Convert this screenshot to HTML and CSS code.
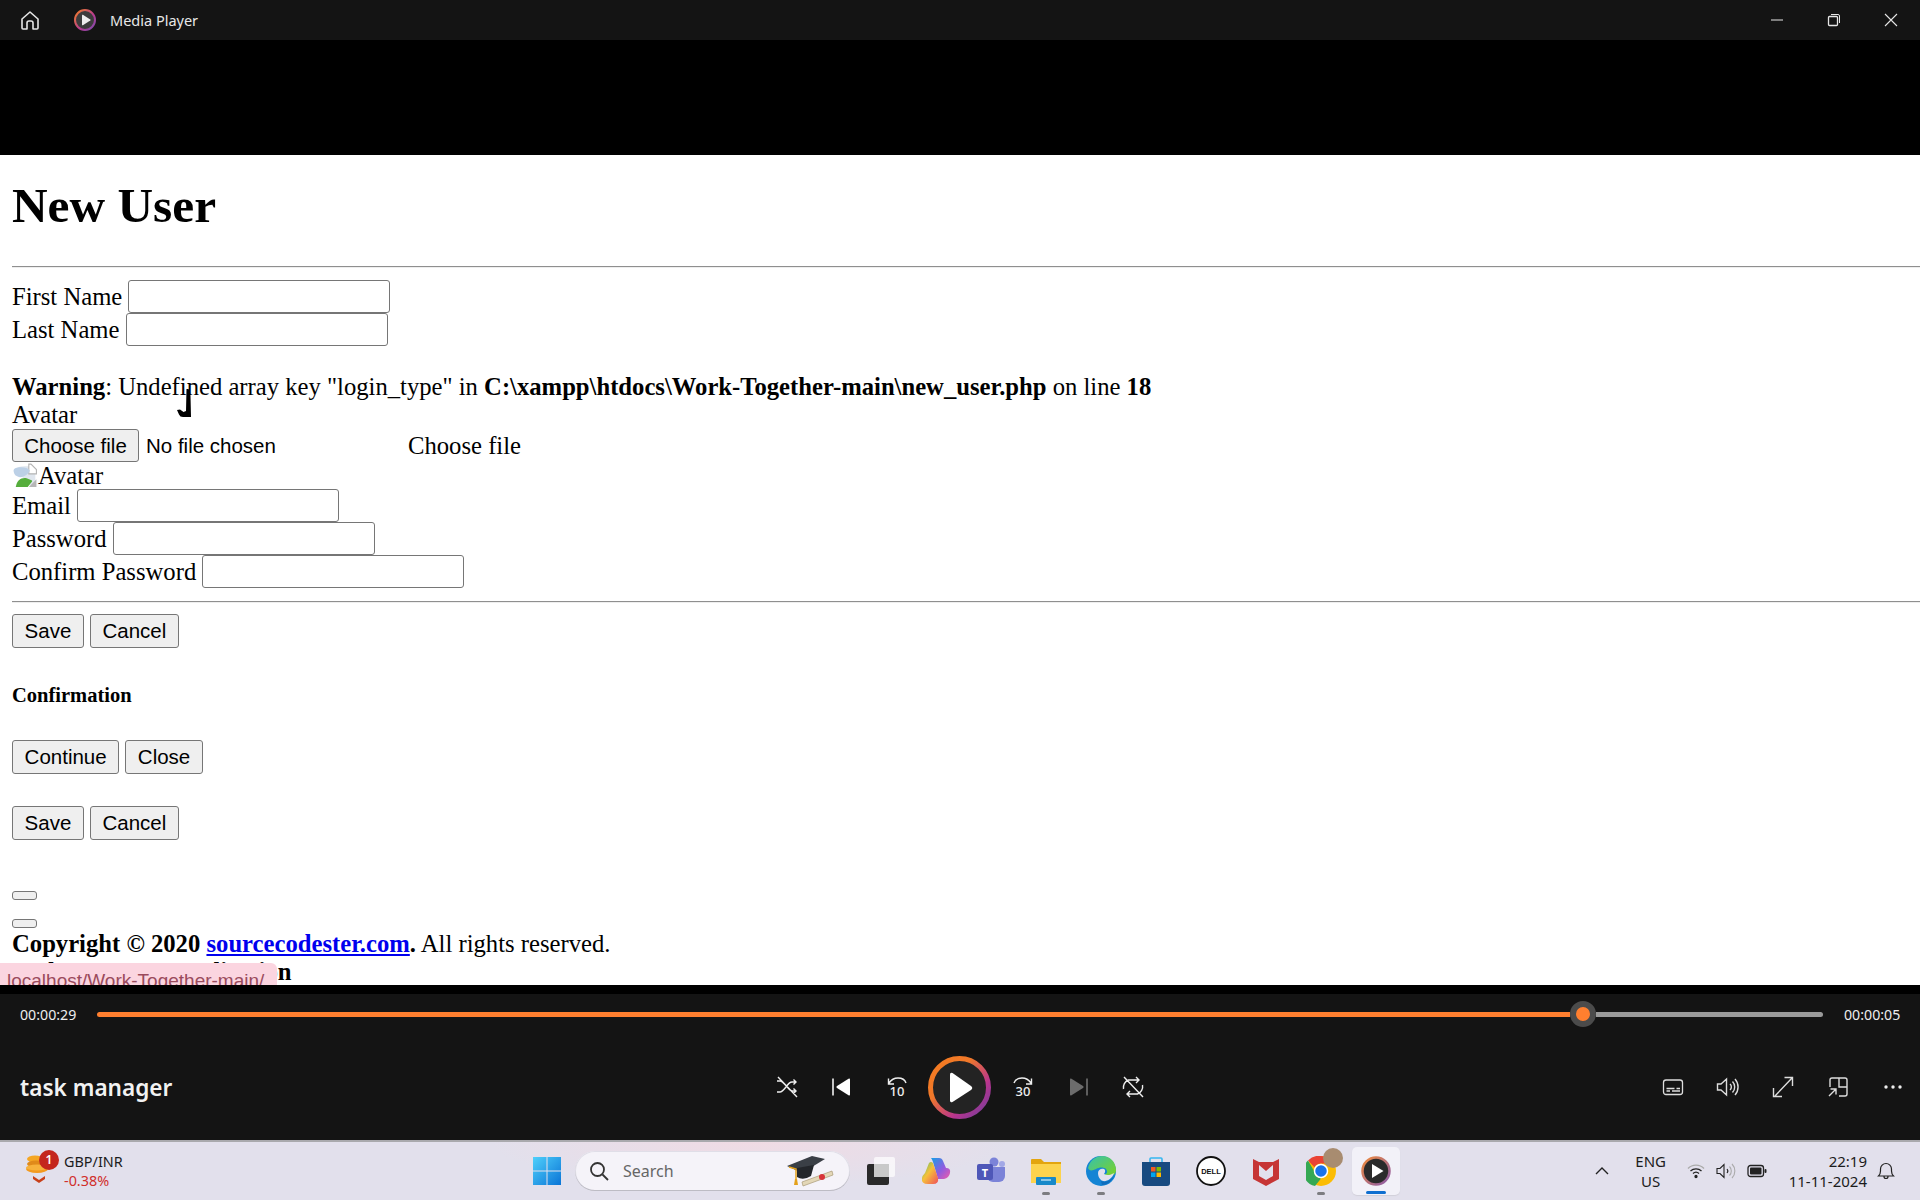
FILE: index.html
```html
<!DOCTYPE html>
<html lang="en">
<head>
<meta charset="utf-8">
<title>Media Player</title>
<link rel="stylesheet" href="styles.css">
</head>
<body>
<div class="app">
  <header class="titlebar">
    <svg class="tb-home" width="24" height="24" viewBox="0 0 24 24" fill="none" stroke="#e6e6e6" stroke-width="1.6" stroke-linejoin="round"><path d="M4 11 12 4l8 7v9a1 1 0 0 1-1 1h-4v-6a2 2 0 0 0-2-2h-2a2 2 0 0 0-2 2v6H5a1 1 0 0 1-1-1z"/></svg>
    <svg class="tb-logo" width="24" height="24" viewBox="0 0 24 24"><defs><linearGradient id="ring1" x1="0" y1="0" x2="1" y2="1"><stop offset="0" stop-color="#f58025"/><stop offset=".6" stop-color="#b53a92"/><stop offset="1" stop-color="#7a4fb0"/></linearGradient></defs><circle cx="12" cy="12" r="10" fill="#3c3c3c" stroke="url(#ring1)" stroke-width="2"/><path d="M9 7.3v9.4a.6.6 0 0 0 .9.5l7.4-4.7a.6.6 0 0 0 0-1L9.900 6.800a.6.6 0 0 0-.9.5z" fill="#eee"/></svg>
    <span class="tb-title">Media Player</span>
    <div class="win-btns">
      <span class="win-btn"><svg width="14" height="14" viewBox="0 0 14 14"><path d="M1 7h12" stroke="#e6e6e6"/></svg></span>
      <span class="win-btn"><svg width="14" height="14" viewBox="0 0 14 14" fill="none" stroke="#e6e6e6"><rect x="1.500" y="3.500" width="9" height="9" rx="1" stroke-width="1.300"/><path d="M4 1.500h7a1.500 1.500 0 0 1 1.500 1.500v7"/></svg></span>
      <span class="win-btn"><svg width="14" height="14" viewBox="0 0 14 14"><path d="M1 1l12 12M13 1 1 13" stroke="#e6e6e6" stroke-width="1.100"/></svg></span>
    </div>
  </header>
  <div class="letterbox"></div>
  <main class="page">
    <h1 class="heading">New User</h1>
    <hr class="rule rule-top">
    <div class="row"><label>First Name</label> <input class="field" type="text"></div>
    <div class="row"><label>Last Name</label> <input class="field" type="text"></div>
    <div class="line warn"><b>Warning</b>: Undefined array key "login_type" in <b>C:\xampp\htdocs\Work-Together-main\new_user.php</b> on line <b>18</b></div>
    <div class="line">Avatar</div>
    <div class="file-row"><button class="btn" type="button">Choose file</button><span class="no-file">No file chosen</span><span class="file-label">Choose file</span></div>
    <div class="img-row"><svg width="26" height="25" viewBox="0 0 23 23"><path d="M2 6q3-3 9-3h5l5 4v14h-4z" fill="#dfe6ee"/><path d="M15 1h2l5 5v4h-7z" fill="#fff" stroke="#b4b4b4"/><path d="M1 7c0-2 3-3 7-3s6 1 8 3c-1 3-5 6-9 6-3 0-6-2-6-6z" fill="#bcd0e6"/><path d="M3 22c1-6 5-9 10-8l5 2v1l-4 5z" fill="#55ad3c"/><path d="M15 22l7-7v7z" fill="#b6b6b6"/></svg><span>Avatar</span></div>
    <div class="row"><label>Email</label> <input class="field" type="text"></div>
    <div class="row"><label>Password</label> <input class="field" type="text"></div>
    <div class="row"><label>Confirm Password</label> <input class="field" type="text"></div>
    <hr class="rule rule-mid">
    <div class="btn-row"><button class="btn" type="button">Save</button><button class="btn" type="button">Cancel</button></div>
    <h5 class="confirm">Confirmation</h5>
    <div class="btn-row continue"><button class="btn" type="button">Continue</button><button class="btn" type="button">Close</button></div>
    <div class="btn-row save2"><button class="btn" type="button">Save</button><button class="btn" type="button">Cancel</button></div>
    <button class="btn-tiny first" type="button"></button>
    <button class="btn-tiny second" type="button"></button>
    <div class="line copy"><b>Copyright © 2020 <a href="#">sourcecodester.com</a>.</b> All rights reserved.</div>
    <div class="line"><b>Task Manager Application</b></div>
    <svg class="cursor" width="17" height="28" viewBox="0 0 17 28"><path d="M9.500 0h2l1.500 3 .5 4 .5 21H6q-3 0-4-2.500L0 21l3-.5 3.500 2.500 2.500-1z" fill="#000"/></svg>
    <div class="status">localhost/Work-Together-main/</div>
  </main>
  <div class="band"></div>
  <section class="player">
    <div class="seek">
      <span class="time">00:00:29</span>
      <div class="track"><div class="done"></div><div class="thumb"></div><div class="rest"></div></div>
      <span class="time">00:00:05</span>
    </div>
    <div class="transport">
      <div class="name">task manager</div>
      <div class="controls">
        <span class="ctl"><svg width="24" height="24" viewBox="0 0 24 24" fill="none" stroke="#eee" stroke-width="1.400"><path d="M2 6h3c4 0 8 9 12 10h4M2 17h3c2 0 4-2.500 6-5 2-3 4-5 6-5h4M18.500 4.500 21 7l-2.500 2.500M18.500 13.500 21 16l-2.500 2.500M3 2l19 20"/></svg></span>
        <span class="ctl"><svg width="24" height="24" viewBox="0 0 24 24"><path d="M3 3.500v17" stroke="#fff" stroke-width="1.500"/><path d="M20 4.500v15q0 1.500-1.500.8L7 13q-1.500-1 0-2l11.500-7.300q1.500-.7 1.500.8z" fill="#fff"/></svg></span>
        <span class="ctl"><svg width="26" height="26" viewBox="0 0 26 26" fill="none" stroke="#eee" stroke-width="1.400"><path d="M5 9c2-3 5-5 9-5 4 0 7 2 8 5M4.500 4.500V10H10"/><text x="13" y="22" class="ico-num" text-anchor="middle">10</text></svg></span>
        <span class="ctl play"><svg width="63" height="63" viewBox="0 0 63 63"><defs><linearGradient id="ring2" x1="0" y1="0" x2="1" y2="1"><stop offset="0" stop-color="#f57c1f"/><stop offset=".35" stop-color="#f0782a"/><stop offset=".7" stop-color="#b8348f"/><stop offset="1" stop-color="#6c3f9c"/></linearGradient></defs><circle cx="31.500" cy="31.500" r="29" fill="#232323" stroke="url(#ring2)" stroke-width="5"/><path d="M22 18.500v26q0 2.500 2.500 1.400l18.500-11.800q2.500-2.200 0-4.200L24.500 17q-2.500-1-2.500 1.500z" fill="#fff"/></svg></span>
        <span class="ctl"><svg width="26" height="26" viewBox="0 0 26 26" fill="none" stroke="#eee" stroke-width="1.400"><path d="M21 9c-2-3-5-5-9-5-4 0-7 2-8 5M21.500 4.500V10H16"/><text x="13" y="22" class="ico-num" text-anchor="middle">30</text></svg></span>
        <span class="ctl"><svg width="24" height="24" viewBox="0 0 24 24"><path d="M21 3.500v17" stroke="#777" stroke-width="1.500"/><path d="M4 4.500v15q0 1.500 1.500.8L17 13q1.500-1 0-2L5.500 3.700Q4 3 4 4.500z" fill="#6c6c6c"/></svg></span>
        <span class="ctl"><svg width="24" height="24" viewBox="0 0 24 24" fill="none" stroke="#eee" stroke-width="1.400"><path d="M2.500 14a8 8 0 0 1 5-9h10M15 2l3 3-3 3M21.500 10a8 8 0 0 1-5 9h-10M9 16l-3 3 3 3M3 2l19 20"/></svg></span>
      </div>
      <div class="tools">
        <span class="ctl"><svg width="24" height="24" viewBox="0 0 24 24" fill="none" stroke="#ddd" stroke-width="1.300"><rect x="2.500" y="5" width="19" height="14.500" rx="2.500"/><path d="M5.500 13.500h8M15.500 13.500h3.500M5.500 16h3.500M11 16h8"/></svg></span>
        <span class="ctl"><svg width="24" height="24" viewBox="0 0 24 24" fill="none" stroke="#ddd" stroke-width="1.400"><path d="M1.500 9v6h3.500l5.500 5V4L5 9zM14 9a4 4 0 0 1 0 6M16.500 6.500a8 8 0 0 1 0 11M19 4a12 12 0 0 1 0 16"/></svg></span>
        <span class="ctl"><svg width="24" height="24" viewBox="0 0 24 24" fill="none" stroke="#ddd" stroke-width="1.400"><path d="M4 21 21 3M13.500 2.500H21.500V11M2.500 13v8.500H11"/></svg></span>
        <span class="ctl"><svg width="24" height="24" viewBox="0 0 24 24" fill="none" stroke="#ddd" stroke-width="1.400"><path d="M4 12V5a2 2 0 0 1 2-2h13a2 2 0 0 1 2 2v14a2 2 0 0 1-2 2h-6M13 3v9h8M3 21l7-7M4.500 14h5.500v5.500"/></svg></span>
        <span class="ctl"><svg width="24" height="24" viewBox="0 0 24 24" fill="#eee"><circle cx="5" cy="12" r="1.700"/><circle cx="12" cy="12" r="1.700"/><circle cx="19" cy="12" r="1.700"/></svg></span>
      </div>
    </div>
  </section>
  <footer class="taskbar">
    <div class="widget">
      <div class="coin">
        <svg width="26" height="38" viewBox="0 0 26 38"><ellipse cx="10" cy="10" rx="8" ry="3.500" fill="#f5a623"/><ellipse cx="11" cy="15" rx="9" ry="3.500" fill="#e08a1a"/><ellipse cx="12" cy="20" rx="11" ry="4" fill="#f39a1f"/><ellipse cx="12" cy="18.500" rx="11" ry="3" fill="#f7b23c"/><path d="M8 27l6 4 6-4v3l-6 4-6-4z" fill="#c8401a"/></svg>
        <span class="badge">1</span>
      </div>
      <div class="w-text"><span class="w-name">GBP/INR</span><span class="w-val">-0.38%</span></div>
    </div>
    <div class="apps">
      <span class="app-ico win"><svg width="30" height="30" viewBox="0 0 30 30"><defs><linearGradient id="wing" x1="0" y1="0" x2="1" y2="1"><stop offset="0" stop-color="#4fd0fb"/><stop offset="1" stop-color="#0a74d6"/></linearGradient></defs><path d="M1 1h13.500v13.500H1zM15.500 1H29v13.500H15.500zM1 15.500h13.500V29H1zM15.500 15.500H29V29H15.500z" fill="url(#wing)"/></svg></span>
      <div class="search">
        <svg width="20" height="20" viewBox="0 0 20 20" fill="none" stroke="#333" stroke-width="1.800"><circle cx="8.500" cy="8.500" r="6.500"/><path d="M13.500 13.500 19 19"/></svg>
        <span class="s-text">Search</span>
        <svg class="cap" width="50" height="34" viewBox="0 0 50 34"><path d="M1 12 26 2l13 3-23 14z" fill="#3a3f46"/><path d="M11 14v9q6 4 14-1l3-11z" fill="#23262b"/><path d="M3 13l7 2v10" fill="none" stroke="#e4a11b" stroke-width="1.500"/><path d="M9 25h2l1 6H8z" fill="#e4a11b"/><path d="M16 28 46 17l1 4-30 11z" fill="#e3d7b7" stroke="#a99a76" stroke-width=".7"/><circle cx="36" cy="23" r="3" fill="#d8343a"/></svg>
      </div>
      <span class="app-ico"><svg width="30" height="30" viewBox="0 0 30 30"><rect x="8" y="1" width="21" height="20" rx="2" fill="#fff" opacity=".7"/><rect x="1" y="8" width="22" height="21" rx="2" fill="#2a2a2a"/><rect x="8" y="8" width="15" height="13" fill="#c9c9c9"/></svg></span>
      <span class="app-ico"><svg width="30" height="28" viewBox="0 0 30 28"><defs><linearGradient id="co1" x1="0" y1="0" x2="1" y2="1"><stop offset="0" stop-color="#14a0e6"/><stop offset=".55" stop-color="#8f5be0"/><stop offset="1" stop-color="#f05ca8"/></linearGradient><linearGradient id="co2" x1="0" y1="0" x2="1" y2="1"><stop offset="0" stop-color="#4cc26e"/><stop offset=".45" stop-color="#f6c03a"/><stop offset="1" stop-color="#ef4f5a"/></linearGradient></defs><path d="M12 1h6q3 0 4 3l3 7q5 0 4 5-1 5-6 6h-6l-5-17q-1-3-2-4z" fill="url(#co1)"/><path d="M8 6q2-2 4 0l5 15q1 6-5 6H7q-7 0-6-6 0-2 3-5z" fill="url(#co2)"/></svg></span>
      <span class="app-ico"><svg width="30" height="28" viewBox="0 0 30 28"><circle cx="18" cy="5" r="4.500" fill="#7b83d8"/><circle cx="26" cy="7" r="3" fill="#a2a8e6"/><path d="M11 10h18v9a6 6 0 0 1-6 6h-6a6 6 0 0 1-6-6z" fill="#7b83d8"/><rect x="1" y="7" width="16" height="16" rx="2" fill="#4e57b8"/><text x="9" y="20" class="ico-t" text-anchor="middle">T</text></svg></span>
      <span class="app-ico running"><svg width="30" height="28" viewBox="0 0 30 28"><path d="M0 3a1 1 0 0 1 1-1h9l3 3h17v6H0z" fill="#e3a50f"/><path d="M0 7h30v19H0z" fill="#fcd34d"/><rect x="5" y="20" width="20" height="8" rx="1" fill="#1789c9"/><path d="M10 23h10" stroke="#d6effc" stroke-width="1.200"/></svg></span>
      <span class="app-ico running"><svg width="30" height="30" viewBox="0 0 30 30"><defs><linearGradient id="ed1" x1="0" y1="0" x2="1" y2="1"><stop offset="0" stop-color="#35c1b0"/><stop offset="1" stop-color="#7ed321"/></linearGradient></defs><circle cx="15" cy="15" r="15" fill="#1484d4"/><path d="M2 12C4 4 10 0 16 0c8 0 14 6 14 14 0 5-4 6-8 6-3 0-4-1-4-1 3-1 4-3 2-6-2-2-7-2-10 0-4 2-7 2-8-1z" fill="url(#ed1)"/><path d="M12 17c0-3 3-5 6-4 2 1 1 4 0 5 3 2 7 1 10-1-2 7-10 10-13 7-2-2-3-4-3-7z" fill="#e2e0ec"/><path d="M15 25c5 2 11-1 13-6-1 5-6 10-12 10z" fill="#0f6dbd"/></svg></span>
      <span class="app-ico"><svg width="30" height="30" viewBox="0 0 30 30"><path d="M9 6V3a1 1 0 0 1 1-1h10a1 1 0 0 1 1 1v3" fill="none" stroke="#36b7f0" stroke-width="1.600"/><path d="M1 6h28v21a3 3 0 0 1-3 3H4a3 3 0 0 1-3-3z" fill="#174a80"/><path d="M10 11h4.500v4.500H10z" fill="#f05a22"/><path d="M15.500 11H20v4.500h-4.500z" fill="#7fba00"/><path d="M10 16.500h4.500V21H10z" fill="#00a4ef"/><path d="M15.500 16.500H20V21h-4.500z" fill="#ffb900"/></svg></span>
      <span class="app-ico"><svg width="30" height="30" viewBox="0 0 30 30"><circle cx="15" cy="15" r="14" fill="#fff" stroke="#111" stroke-width="1.800"/><text x="15" y="18" class="ico-dell" text-anchor="middle">DELL</text></svg></span>
      <span class="app-ico"><svg width="28" height="30" viewBox="0 0 28 30"><path d="M1 3l6 3 7 0 7 0 6-3v20l-13 7-13-7z" fill="#c63535"/><path d="M7 9l7 6 7-6v11l-7 4-7-4z" fill="#e2e0ec"/></svg></span>
      <span class="app-ico running"><svg width="30" height="30" viewBox="0 0 30 30"><circle cx="15" cy="15" r="15" fill="#fbbc04"/><path d="M15 0a15 15 0 0 1 13 7.500H15a7.500 7.500 0 0 0-6.500 3.750L2 4.500A15 15 0 0 1 15 0z" fill="#ea4335"/><path d="M2 4.500l6.500 11.250A7.500 7.500 0 0 0 15 22.500L9 30A15 15 0 0 1 2 4.500z" fill="#34a853"/><circle cx="15" cy="15" r="6.500" fill="#1a73e8" stroke="#fff" stroke-width="1.500"/></svg><span class="avatar-dot"></span></span>
      <span class="app-ico active"><svg width="30" height="30" viewBox="0 0 30 30"><defs><linearGradient id="ring3" x1="0" y1="0" x2="1" y2="1"><stop offset="0" stop-color="#ef8a3c"/><stop offset="1" stop-color="#8a5bab"/></linearGradient></defs><circle cx="15" cy="15" r="13.500" fill="#2b2b2b" stroke="url(#ring3)" stroke-width="2.500"/><path d="M11 8v14l11.500-7z" fill="#fff"/></svg></span>
    </div>
    <div class="tray">
      <svg class="caret" width="14" height="8" viewBox="0 0 14 8" fill="none" stroke="#222" stroke-width="1.400"><path d="M1 7l6-6 6 6"/></svg>
      <div class="lang"><span>ENG</span><span>US</span></div>
      <svg class="t-ico" width="18" height="16" viewBox="0 0 18 16" fill="none" stroke="#222" stroke-width="1.300"><path d="M1 5.500a11 11 0 0 1 16 0" stroke="#aaa"/><path d="M3.500 8a8 8 0 0 1 11 0M6 10.500a4.500 4.500 0 0 1 6 0"/><circle cx="9" cy="13.500" r="1" fill="#222"/></svg>
      <svg class="t-ico" width="20" height="18" viewBox="0 0 20 18" fill="none" stroke="#222" stroke-width="1.100"><path d="M1 6.500v5h3l4 4V2.500l-4 4zM11 7a3 3 0 0 1 0 4"/><path d="M13.500 4.500a6.500 6.500 0 0 1 0 9M16 2a10 10 0 0 1 0 14" stroke="#aaa"/></svg>
      <svg class="t-ico" width="20" height="14" viewBox="0 0 20 14"><rect x="1" y="1.500" width="15.500" height="11" rx="2.500" fill="none" stroke="#222" stroke-width="1.300"/><rect x="3" y="3.500" width="11.500" height="7" rx="1" fill="#222"/><rect x="17.500" y="5" width="2" height="4" rx="1" fill="#222"/></svg>
      <div class="clock"><span>22:19</span><span>11-11-2024</span></div>
      <svg class="bell" width="18" height="20" viewBox="0 0 18 20" fill="none" stroke="#222" stroke-width="1.200"><path d="M1.500 15c1.500-1.500 2-3 2-5V8a5.500 5.500 0 0 1 11 0v2c0 2 .5 3.500 2 5zM7 15.500a2 2 0 0 0 4 0"/></svg>
    </div>
  </footer>
</div>
</body>
</html>
```
FILE: styles.css
```css
* { box-sizing: border-box; }
html, body { margin: 0; padding: 0; height: 100%; overflow: hidden; }
body { font-family: "Liberation Serif", serif; color: #000; background: #000; }
.app { display: flex; flex-direction: column; width: 1920px; height: 1200px; }

/* title bar */
.titlebar { flex: 0 0 40px; display: flex; align-items: center; background: #141414; color: #e8e8e8; font: 14.5px "Noto Sans", "Open Sans", sans-serif; }
.tb-home { margin-left: 18px; }
.tb-logo { margin-left: 31px; }
.tb-title { margin-left: 13px; }
.win-btns { margin-left: auto; display: flex; padding-right: 1px; }
.win-btn { width: 57px; height: 40px; display: flex; align-items: center; justify-content: center; }
.letterbox { flex: 0 0 115px; background: #000; }
.band { flex: 0 0 9px; background: #000; }

/* page */
.page { flex: 0 0 830px; position: relative; overflow: hidden; background: #fff; padding-left: 12px; font-size: 24.66px; }
.heading { margin: 0; padding-top: 23px; height: 79px; font-size: 49.32px; line-height: 55px; }
.rule { border: 0; border-top: 1px solid #8f8f8f; border-bottom: 1px solid #eee; height: 2px; margin: 0; }
.rule-top { margin-top: 32px; margin-bottom: 12px; }
.rule-mid { margin-top: 13px; margin-bottom: 11px; }
.row { height: 33px; line-height: 32px; white-space: nowrap; display: flex; align-items: center; gap: 6px; }
.field { width: 262px; height: 33px; border: 1px solid #767676; border-radius: 3px; background: #fff; padding: 0; margin: 0; }
.line { height: 28px; line-height: 28px; white-space: nowrap; }
.warn { margin-top: 27px; }
.btn { height: 34px; font: 20.5px "Liberation Sans", Arial, sans-serif; background: #efefef; border: 1px solid #767676; border-radius: 3px; padding: 0 11.6px; color: #000; margin: 0; }
.file-row { height: 33px; display: flex; align-items: center; }
.file-row .btn { height: 33px; width: 127px; padding: 0; }
.no-file { margin-left: 7px; font: 20.5px "Liberation Sans", Arial, sans-serif; width: 262px; }
.file-label { line-height: 31px; }
.img-row { height: 27px; line-height: 27px; display: flex; align-items: center; }
.btn-row { display: flex; gap: 6px; height: 34px; }
.confirm { margin: 0; margin-top: 36px; font-size: 20.5px; line-height: 22px; }
.continue { margin-top: 34px; }
.save2 { margin-top: 32px; }
.btn-tiny { display: block; width: 25px; height: 9px; padding: 0; background: #efefef; border: 1px solid #767676; border-radius: 3px; }
.btn-tiny.first { margin-top: 51px; }
.btn-tiny.second { margin-top: 19px; }
.copy { margin-top: 2px; }
.page a { color: #0000ee; text-decoration: underline; }
.cursor { position: absolute; left: 177px; top: 234px; }
.status { position: absolute; left: 0; bottom: 0; width: 277px; height: 22px; padding-left: 7px; background: #fbd5e0; border-top-right-radius: 6px; color: #9a4a5c; font: 19px/35px "Liberation Sans", Arial, sans-serif; white-space: nowrap; overflow: hidden; }

/* player */
.player { flex: 0 0 146px; background: #141414; color: #eee; font-family: "Noto Sans", "Open Sans", sans-serif; }
.seek { height: 40px; display: flex; align-items: center; padding: 0 20px; gap: 21px; }
.time { font-size: 14.2px; flex: none; width: 56px; white-space: nowrap; }
.track { flex: 1; display: flex; align-items: center; height: 26px; }
.done { width: 1473px; height: 5px; border-radius: 3px 0 0 3px; background: #ff7f2f; }
.thumb { flex: none; width: 26px; height: 26px; border-radius: 50%; background: #ff7f2f; border: 6.500px solid #4b4b4b; }
.rest { flex: 1; height: 5px; background: #9a9a9a; border-radius: 0 3px 3px 0; }
.transport { position: relative; height: 106px; display: flex; align-items: center; }
.name { width: 759px; padding-left: 20px; font-size: 22.6px; font-weight: 600; color: #f2f2f2; }
.controls { display: flex; align-items: center; }
.ctl { width: 55px; height: 63px; display: flex; align-items: center; justify-content: center; }
.ctl.play { width: 71px; }
.tools { margin-left: auto; display: flex; }
.ico-num { font: 500 13px "Noto Sans", sans-serif; fill: #eee; stroke: none; }

/* taskbar */
.taskbar { flex: 0 0 60px; display: flex; align-items: center; border-top: 2px solid #a9a9ad; color: #1c1c1c; font-family: "Noto Sans", "Open Sans", sans-serif; background: radial-gradient(ellipse 260px 45px at 750px 0, #f0dbe4, transparent), #e2e0ec; }
.widget { width: 518px; display: flex; align-items: center; padding-left: 25px; }
.coin { position: relative; width: 39px; height: 44px; }
.badge { position: absolute; left: 14px; top: 1px; width: 20px; height: 20px; border-radius: 50%; background: #c4261d; color: #fff; font-size: 12px; font-weight: 600; line-height: 20px; text-align: center; }
.w-text { display: flex; flex-direction: column; font-size: 14.4px; line-height: 19px; }
.w-val { color: #d12f2b; }
.apps { display: flex; align-items: center; }
.app-ico { position: relative; width: 55px; height: 48px; display: flex; align-items: center; justify-content: center; }
.app-ico.win { width: 57px; }
.search { width: 275px; height: 40px; margin: 0 3px 0 0; padding-left: 14px; display: flex; align-items: center; border-radius: 20px; background: #f5f3f9; box-shadow: inset 0 -1px 0 #bdbcc4, inset 0 0 0 1px #e0dee8; color: #666; }
.s-text { margin-left: 14px; font-size: 16px; }
.cap { margin-left: auto; margin-right: 14px; }
.ico-t { font: 700 11px "Noto Sans", sans-serif; fill: #fff; }
.ico-dell { font: 700 7.500px "Liberation Sans", sans-serif; fill: #111; }
.app-ico.active { margin-left: 4px; width: 48px; border-radius: 5px; background: #f2f1f8; box-shadow: 0 1px 1px #d2d0da; }
.app-ico.active::after { content: ""; position: absolute; left: 14px; bottom: 1px; width: 20px; height: 3px; border-radius: 2px; background: #0f6fd0; }
.running::after { content: ""; position: absolute; left: 23.5px; bottom: 0; width: 8px; height: 3px; border-radius: 2px; background: #7c7c80; }
.avatar-dot { position: absolute; left: 30px; top: 1px; width: 20px; height: 20px; border-radius: 50%; background: #a88c70; }
.tray { margin-left: auto; display: flex; align-items: center; font-size: 15px; line-height: 20px; height: 58px; }
.caret { margin-right: 26px; }
.lang { display: flex; flex-direction: column; align-items: center; margin-right: 21px; }
.t-ico { margin-right: 11px; }
.clock { display: flex; flex-direction: column; align-items: flex-end; margin-left: 9px; width: 80px; white-space: nowrap; }
.bell { margin: 0 25px 0 10px; }
```
